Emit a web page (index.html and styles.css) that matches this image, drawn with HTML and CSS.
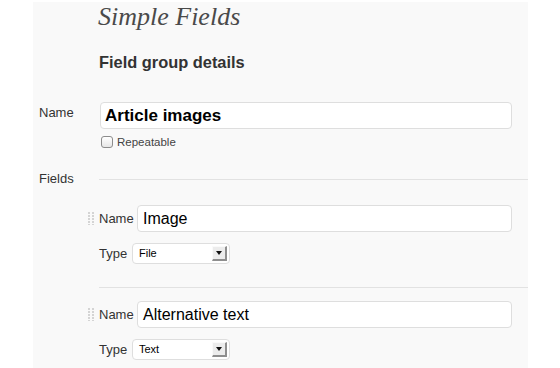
FILE: index.html
```html
<html>
<head>
<link rel="stylesheet" href="styles.css">
</head>
<body>
<div class="panel">
  <h1 class="pageTitle">Simple Fields</h1>
  <h2 class="sectionTitle">Field group details</h2>

  <div class="formRow">
    <div class="rowLabel nameLabel">Name</div>
    <div class="rowMain">
      <div class="textBox bigBox">Article images</div>
      <div class="checkRow">
        <span class="checkBox"></span>
        <span class="checkText">Repeatable</span>
      </div>
    </div>
  </div>

  <div class="formRow fieldsRow">
    <div class="rowLabel fieldsLabel">Fields</div>
    <div class="fieldList">
      <div class="fieldItem">
        <div class="itemLine">
          <span class="dragHandle"></span>
          <span class="itemLabel nameCol">Name</span>
          <div class="textBox smallBox">Image</div>
        </div>
        <div class="itemLine">
          <span class="itemLabel typeCol">Type</span>
          <div class="selectBox">
            <span class="selectText">File</span>
            <span class="selectBtn"><span class="arrow"></span></span>
          </div>
        </div>
      </div>
      <div class="fieldItem">
        <div class="itemLine">
          <span class="dragHandle"></span>
          <span class="itemLabel nameCol">Name</span>
          <div class="textBox smallBox">Alternative text</div>
        </div>
        <div class="itemLine">
          <span class="itemLabel typeCol">Type</span>
          <div class="selectBox">
            <span class="selectText">Text</span>
            <span class="selectBtn"><span class="arrow"></span></span>
          </div>
        </div>
      </div>
    </div>
  </div>
</div>
</body>
</html>
```

FILE: styles.css
```css
body {
  margin: 0;
  background-color: #fff;
  font-family: "Liberation Sans", Arial, sans-serif;
  color: #333;
}

.panel {
  margin: 2px 0 0 33px;
  width: 495px;
  min-height: 366px;
  padding-left: 6px;
  box-sizing: border-box;
  background-color: #f9f9f9;
  overflow: hidden;
}

.pageTitle {
  margin: 0;
  padding-left: 59px;
  font-family: "Liberation Serif", Georgia, serif;
  font-style: italic;
  font-weight: normal;
  font-size: 26px;
  line-height: 30px;
  color: #4a4a4a;
}

.sectionTitle {
  margin: 20px 0 0 60px;
  font-size: 16.4px;
  line-height: 20px;
  font-weight: bold;
  color: #333;
}

.formRow {
  display: flex;
  margin-top: 30px;
}

.rowLabel {
  font-size: 13px;
  line-height: 16px;
}
.nameLabel {
  width: 61px;
  padding-top: 3px;
}

.rowMain {
  width: 412px;
}

.textBox {
  box-sizing: border-box;
  height: 27px;
  line-height: 25px;
  background-color: #fff;
  border: 1px solid #dedede;
  border-radius: 4px;
  color: #000;
  white-space: nowrap;
}
.bigBox {
  padding: 0 4px;
  font-size: 17px;
  font-weight: bold;
}
.smallBox {
  width: 375px;
  padding: 0 5px;
  font-size: 16px;
}

.checkRow {
  display: flex;
  align-items: center;
  margin-top: 7px;
  height: 12px;
}
.checkBox {
  box-sizing: border-box;
  width: 12px;
  height: 12px;
  margin-left: 1px;
  border: 1px solid #8c8c8c;
  border-radius: 3px;
  background: linear-gradient(#fff, #e6e6e6);
}
.checkText {
  margin-left: 4px;
  font-size: 11.5px;
  line-height: 12px;
  color: #444;
}

.fieldsRow {
  margin-top: 23px;
}
.fieldsLabel {
  width: 60px;
  flex: none;
}

.fieldList {
  flex: 1;
  margin-top: 8px;
  border-top: 1px solid #e2e2e2;
  padding-top: 12px;
}

.fieldItem {
  display: flex;
  flex-direction: column;
  gap: 11px;
  padding: 13px 0 23px;
}
.fieldItem + .fieldItem {
  border-top: 1px solid #e2e2e2;
}

.itemLine {
  display: flex;
  align-items: center;
}

.dragHandle {
  width: 6px;
  height: 13px;
  margin-left: -11px;
  margin-right: 5px;
  background-image:
    repeating-linear-gradient(to bottom, #d4d4d4 0 2px, transparent 2px 3px);
  -webkit-mask: linear-gradient(to right, #000 0 2px, transparent 2px 4px, #000 4px 6px);
  align-self: flex-start;
  margin-top: 7px;
}

.itemLabel {
  font-size: 13px;
  line-height: 16px;
  color: #333;
}
.nameCol {
  width: 38px;
}
.typeCol {
  width: 33px;
}

.selectBox {
  box-sizing: border-box;
  display: flex;
  align-items: center;
  width: 98px;
  height: 21px;
  padding-left: 6px;
  background-color: #fff;
  border: 1px solid #dedede;
  border-radius: 4px;
}
.selectText {
  font-size: 11px;
  line-height: 19px;
  color: #000;
}
.selectBtn {
  box-sizing: border-box;
  display: flex;
  align-items: center;
  justify-content: center;
  width: 15px;
  height: 15px;
  margin-left: auto;
  margin-right: 2px;
  background-color: #ececec;
  border-top: 1px solid #fafafa;
  border-left: 1px solid #fafafa;
  border-right: 2px solid #8e8e8e;
  border-bottom: 2px solid #8e8e8e;
}
.arrow {
  width: 0;
  height: 0;
  border-left: 3px solid transparent;
  border-right: 3px solid transparent;
  border-top: 4px solid #111;
}
```
